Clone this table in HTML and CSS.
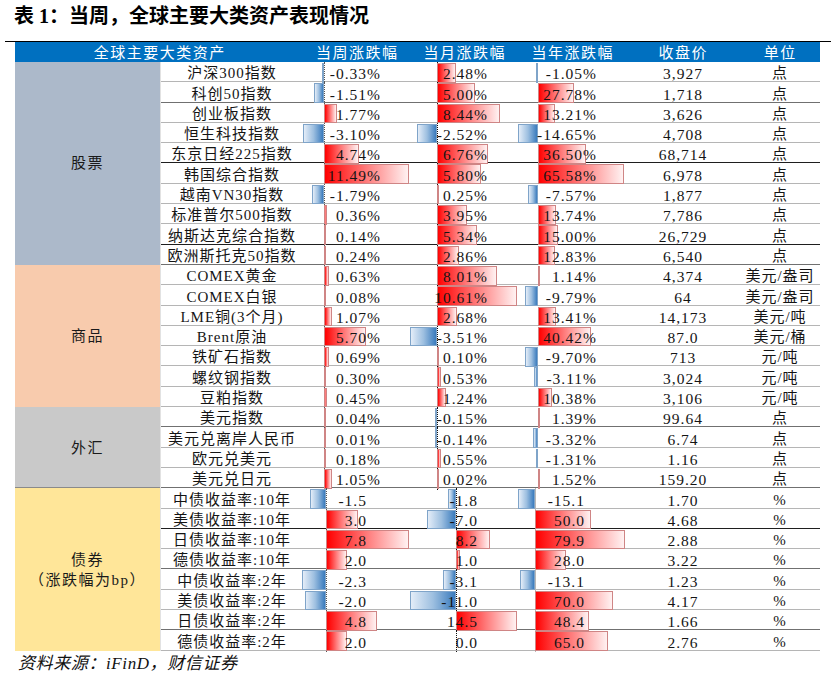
FILE: index.html
```html
<!DOCTYPE html>
<html lang="zh-CN">
<head>
<meta charset="utf-8">
<title>表 1</title>
<link rel="stylesheet" href="styles.css">
</head>
<body>
<h1 class="title">表 1：当周，全球主要大类资产表现情况</h1>
<div class="topline"></div>
<div class="table">
  <div class="thead">
    <div class="th">全球主要大类资产</div>
    <div class="th">当周涨跌幅</div>
    <div class="th">当月涨跌幅</div>
    <div class="th">当年涨跌幅</div>
    <div class="th">收盘价</div>
    <div class="th">单位</div>
  </div>

  <div class="group g-stock">
    <div class="cat"><span>股票</span></div>
    <div class="rows">
      <div class="row"><div class="name">沪深300指数</div>
        <div class="c wk"><i class="bar n" style="width:2.2px"></i><span>-0.33%</span></div>
        <div class="c mo"><i class="bar p" style="width:18.6px"></i><span>2.48%</span></div>
        <div class="c yr"><i class="bar n" style="width:1.5px"></i><span>-1.05%</span></div>
        <div class="px">3,927</div><div class="unit">点</div></div>
      <div class="row d1"><div class="name">科创50指数</div>
        <div class="c wk"><i class="bar n" style="width:10.3px"></i><span>-1.51%</span></div>
        <div class="c mo"><i class="bar p" style="width:37.5px"></i><span>5.00%</span></div>
        <div class="c yr"><i class="bar p" style="width:36.4px"></i><span>27.78%</span></div>
        <div class="px">1,718</div><div class="unit">点</div></div>
      <div class="row"><div class="name">创业板指数</div>
        <div class="c wk"><i class="bar p" style="width:13.1px"></i><span>1.77%</span></div>
        <div class="c mo"><i class="bar p" style="width:63.3px"></i><span>8.44%</span></div>
        <div class="c yr"><i class="bar p" style="width:17.3px"></i><span>13.21%</span></div>
        <div class="px">3,626</div><div class="unit">点</div></div>
      <div class="row"><div class="name">恒生科技指数</div>
        <div class="c wk"><i class="bar n" style="width:21.1px"></i><span>-3.10%</span></div>
        <div class="c mo"><i class="bar n" style="width:19.8px"></i><span>-2.52%</span></div>
        <div class="c yr"><i class="bar n" style="width:20.2px"></i><span>-14.65%</span></div>
        <div class="px">4,708</div><div class="unit">点</div></div>
      <div class="row d2"><div class="name">东京日经225指数</div>
        <div class="c wk"><i class="bar p" style="width:35.1px"></i><span>4.74%</span></div>
        <div class="c mo"><i class="bar p" style="width:50.7px"></i><span>6.76%</span></div>
        <div class="c yr"><i class="bar p" style="width:47.8px"></i><span>36.50%</span></div>
        <div class="px">68,714</div><div class="unit">点</div></div>
      <div class="row"><div class="name">韩国综合指数</div>
        <div class="c wk"><i class="bar p" style="width:85px"></i><span>11.49%</span></div>
        <div class="c mo"><i class="bar p" style="width:43.5px"></i><span>5.80%</span></div>
        <div class="c yr"><i class="bar p" style="width:85.9px"></i><span>65.58%</span></div>
        <div class="px">6,978</div><div class="unit">点</div></div>
      <div class="row"><div class="name">越南VN30指数</div>
        <div class="c wk"><i class="bar n" style="width:12.2px"></i><span>-1.79%</span></div>
        <div class="c mo"><i class="bar p" style="width:1.9px"></i><span>0.25%</span></div>
        <div class="c yr"><i class="bar n" style="width:10.4px"></i><span>-7.57%</span></div>
        <div class="px">1,877</div><div class="unit">点</div></div>
      <div class="row"><div class="name">标准普尔500指数</div>
        <div class="c wk"><i class="bar p" style="width:2.7px"></i><span>0.36%</span></div>
        <div class="c mo"><i class="bar p" style="width:29.6px"></i><span>3.95%</span></div>
        <div class="c yr"><i class="bar p" style="width:18px"></i><span>13.74%</span></div>
        <div class="px">7,786</div><div class="unit">点</div></div>
      <div class="row d2"><div class="name">纳斯达克综合指数</div>
        <div class="c wk"><i class="bar p" style="width:1px"></i><span>0.14%</span></div>
        <div class="c mo"><i class="bar p" style="width:40px"></i><span>5.34%</span></div>
        <div class="c yr"><i class="bar p" style="width:19.7px"></i><span>15.00%</span></div>
        <div class="px">26,729</div><div class="unit">点</div></div>
      <div class="row d1"><div class="name">欧洲斯托克50指数</div>
        <div class="c wk"><i class="bar p" style="width:1.8px"></i><span>0.24%</span></div>
        <div class="c mo"><i class="bar p" style="width:21.5px"></i><span>2.86%</span></div>
        <div class="c yr"><i class="bar p" style="width:16.8px"></i><span>12.83%</span></div>
        <div class="px">6,540</div><div class="unit">点</div></div>
    </div>
  </div>

  <div class="group g-com">
    <div class="cat"><span>商品</span></div>
    <div class="rows">
      <div class="row"><div class="name">COMEX黄金</div>
        <div class="c wk"><i class="bar p" style="width:4.7px"></i><span>0.63%</span></div>
        <div class="c mo"><i class="bar p" style="width:60px"></i><span>8.01%</span></div>
        <div class="c yr"><i class="bar p" style="width:1.5px"></i><span>1.14%</span></div>
        <div class="px">4,374</div><div class="unit">美元/盎司</div></div>
      <div class="row"><div class="name">COMEX白银</div>
        <div class="c wk"><i class="bar p" style="width:1px"></i><span>0.08%</span></div>
        <div class="c mo"><i class="bar p" style="width:79.6px"></i><span>10.61%</span></div>
        <div class="c yr"><i class="bar n" style="width:13.5px"></i><span>-9.79%</span></div>
        <div class="px">64</div><div class="unit">美元/盎司</div></div>
      <div class="row"><div class="name">LME铜(3个月)</div>
        <div class="c wk"><i class="bar p" style="width:7.9px"></i><span>1.07%</span></div>
        <div class="c mo"><i class="bar p" style="width:20.1px"></i><span>2.68%</span></div>
        <div class="c yr"><i class="bar p" style="width:17.6px"></i><span>13.41%</span></div>
        <div class="px">14,173</div><div class="unit">美元/吨</div></div>
      <div class="row"><div class="name">Brent原油</div>
        <div class="c wk"><i class="bar p" style="width:42.2px"></i><span>5.70%</span></div>
        <div class="c mo"><i class="bar n" style="width:26.7px"></i><span>-3.51%</span></div>
        <div class="c yr"><i class="bar p" style="width:53px"></i><span>40.42%</span></div>
        <div class="px">87.0</div><div class="unit">美元/桶</div></div>
      <div class="row"><div class="name">铁矿石指数</div>
        <div class="c wk"><i class="bar p" style="width:5.1px"></i><span>0.69%</span></div>
        <div class="c mo"><i class="bar p" style="width:1px"></i><span>0.10%</span></div>
        <div class="c yr"><i class="bar n" style="width:13.4px"></i><span>-9.70%</span></div>
        <div class="px">713</div><div class="unit">元/吨</div></div>
      <div class="row"><div class="name">螺纹钢指数</div>
        <div class="c wk"><i class="bar p" style="width:2.2px"></i><span>0.30%</span></div>
        <div class="c mo"><i class="bar p" style="width:4px"></i><span>0.53%</span></div>
        <div class="c yr"><i class="bar n" style="width:4.3px"></i><span>-3.11%</span></div>
        <div class="px">3,024</div><div class="unit">元/吨</div></div>
      <div class="row"><div class="name">豆粕指数</div>
        <div class="c wk"><i class="bar p" style="width:3.3px"></i><span>0.45%</span></div>
        <div class="c mo"><i class="bar p" style="width:9.3px"></i><span>1.24%</span></div>
        <div class="c yr"><i class="bar p" style="width:13.6px"></i><span>10.38%</span></div>
        <div class="px">3,106</div><div class="unit">元/吨</div></div>
    </div>
  </div>

  <div class="group g-fx">
    <div class="cat"><span>外汇</span></div>
    <div class="rows">
      <div class="row d1"><div class="name">美元指数</div>
        <div class="c wk"><i class="bar p" style="width:1px"></i><span>0.04%</span></div>
        <div class="c mo"><i class="bar n" style="width:1.1px"></i><span>-0.15%</span></div>
        <div class="c yr"><i class="bar p" style="width:1.8px"></i><span>1.39%</span></div>
        <div class="px">99.64</div><div class="unit">点</div></div>
      <div class="row"><div class="name">美元兑离岸人民币</div>
        <div class="c wk"><i class="bar p" style="width:1px"></i><span>0.01%</span></div>
        <div class="c mo"><i class="bar n" style="width:1.1px"></i><span>-0.14%</span></div>
        <div class="c yr"><i class="bar n" style="width:4.6px"></i><span>-3.32%</span></div>
        <div class="px">6.74</div><div class="unit">点</div></div>
      <div class="row"><div class="name">欧元兑美元</div>
        <div class="c wk"><i class="bar p" style="width:1.3px"></i><span>0.18%</span></div>
        <div class="c mo"><i class="bar p" style="width:4.1px"></i><span>0.55%</span></div>
        <div class="c yr"><i class="bar n" style="width:1.8px"></i><span>-1.31%</span></div>
        <div class="px">1.16</div><div class="unit">点</div></div>
      <div class="row d1"><div class="name">美元兑日元</div>
        <div class="c wk"><i class="bar p" style="width:7.8px"></i><span>1.05%</span></div>
        <div class="c mo"><i class="bar p" style="width:1px"></i><span>0.02%</span></div>
        <div class="c yr"><i class="bar p" style="width:2px"></i><span>1.52%</span></div>
        <div class="px">159.20</div><div class="unit">点</div></div>
    </div>
  </div>

  <div class="group g-bond">
    <div class="cat"><span>债券</span><span>（涨跌幅为bp）</span></div>
    <div class="rows">
      <div class="row"><div class="name">中债收益率:10年</div>
        <div class="c wk"><i class="bar n" style="width:15.9px"></i><span>-1.5</span></div>
        <div class="c mo"><i class="bar n" style="width:7.6px"></i><span>-1.8</span></div>
        <div class="c yr"><i class="bar n" style="width:16.9px"></i><span>-15.1</span></div>
        <div class="px">1.70</div><div class="unit">%</div></div>
      <div class="row d2"><div class="name">美债收益率:10年</div>
        <div class="c wk"><i class="bar p" style="width:31.8px"></i><span>3.0</span></div>
        <div class="c mo"><i class="bar n" style="width:29.4px"></i><span>-7.0</span></div>
        <div class="c yr"><i class="bar p" style="width:56px"></i><span>50.0</span></div>
        <div class="px">4.68</div><div class="unit">%</div></div>
      <div class="row"><div class="name">日债收益率:10年</div>
        <div class="c wk"><i class="bar p" style="width:82.7px"></i><span>7.8</span></div>
        <div class="c mo"><i class="bar p" style="width:34.4px"></i><span>8.2</span></div>
        <div class="c yr"><i class="bar p" style="width:89.5px"></i><span>79.9</span></div>
        <div class="px">2.88</div><div class="unit">%</div></div>
      <div class="row d1"><div class="name">德债收益率:10年</div>
        <div class="c wk"><i class="bar p" style="width:21.2px"></i><span>2.0</span></div>
        <div class="c mo"><i class="bar p" style="width:4.2px"></i><span>1.0</span></div>
        <div class="c yr"><i class="bar p" style="width:31.4px"></i><span>28.0</span></div>
        <div class="px">3.22</div><div class="unit">%</div></div>
      <div class="row"><div class="name">中债收益率:2年</div>
        <div class="c wk"><i class="bar n" style="width:24.4px"></i><span>-2.3</span></div>
        <div class="c mo"><i class="bar n" style="width:13px"></i><span>-3.1</span></div>
        <div class="c yr"><i class="bar n" style="width:14.7px"></i><span>-13.1</span></div>
        <div class="px">1.23</div><div class="unit">%</div></div>
      <div class="row"><div class="name">美债收益率:2年</div>
        <div class="c wk"><i class="bar n" style="width:21.2px"></i><span>-2.0</span></div>
        <div class="c mo"><i class="bar n" style="width:46.2px"></i><span>-11.0</span></div>
        <div class="c yr"><i class="bar p" style="width:78.4px"></i><span>70.0</span></div>
        <div class="px">4.17</div><div class="unit">%</div></div>
      <div class="row d1"><div class="name">日债收益率:2年</div>
        <div class="c wk"><i class="bar p" style="width:50.9px"></i><span>4.8</span></div>
        <div class="c mo"><i class="bar p" style="width:60.9px"></i><span>14.5</span></div>
        <div class="c yr"><i class="bar p" style="width:54.2px"></i><span>48.4</span></div>
        <div class="px">1.66</div><div class="unit">%</div></div>
      <div class="row"><div class="name">德债收益率:2年</div>
        <div class="c wk"><i class="bar p" style="width:21.2px"></i><span>2.0</span></div>
        <div class="c mo"><span>0.0</span></div>
        <div class="c yr"><i class="bar p" style="width:72.8px"></i><span>65.0</span></div>
        <div class="px">2.76</div><div class="unit">%</div></div>
    </div>
  </div>
</div>
<p class="source">资料来源：iFinD，财信证券</p>
</body>
</html>
```

FILE: styles.css
```css
* { box-sizing: border-box; }

body {
  margin: 0;
  background: #fff;
  color: #141414;
  font-family: "Liberation Serif", "Noto Sans CJK SC", serif;
}

.title {
  margin: 0;
  height: 40.5px;
  padding: 3px 0 0 14px;
  font-size: 20px;
  line-height: 26px;
  font-weight: 700;
  color: #000;
  white-space: pre;
}

.topline {
  height: 1.5px;
  margin: 0 6px 0 5px;
  background: #000;
}

.table {
  margin-left: 15px;
  width: 805px;
}

.thead {
  display: grid;
  grid-template-columns: 288px 107px 108px 108px 113px 81px;
  height: 20px;
  background: #0070c0;
  color: #fff;
  font-size: 15px;
  line-height: 20px;
  letter-spacing: 1.5px;
}

.th {
  text-align: center;
  padding-top: 1px;
  padding-left: 1.5px;
}

.group { display: flex; }

.cat {
  width: 146px;
  flex: none;
  display: flex;
  flex-direction: column;
  align-items: center;
  justify-content: center;
  border-right: 1px solid #e2e2e2;
  font-size: 15px;
  line-height: 20px;
  letter-spacing: 1.5px;
  color: #1a1a1a;
}

.g-stock .cat { background: #acb9ca; }
.g-com .cat { background: #f8cbad; }
.g-fx .cat { background: #c9c9c9; box-shadow: inset 0 -1px 0 #8a8a8a; }
.g-bond .cat { background: #ffe699; padding-top: 2px; }

.rows { flex: 1; }

.row {
  display: grid;
  grid-template-columns: 142px 107px 108px 108px 113px 81px;
  height: 20.3px;
  border-bottom: 1px solid #b5b5b5;
  font-size: 15.5px;
  line-height: 19.3px;
  letter-spacing: 1px;
}

.row.d1 { border-bottom-color: #707070; }
.row.d2 { border-bottom-color: #1e1e1e; }

.row > div {
  padding-top: 2.3px;
  white-space: nowrap;
}

.name {
  font-size: 15px;
  text-align: center;
}

.px { text-align: center; padding-left: 1px; }
.unit { text-align: center; font-size: 15px; padding-left: 1px; }

/* data-bar cells */
.c {
  position: relative;
  text-align: right;
  --ax: 20px;
}

.c::before {
  content: "";
  position: absolute;
  top: 0;
  bottom: 0;
  left: var(--ax);
  border-left: 1px dotted #555;
}

.c > span { position: relative; }

.wk { --ax: 21px; padding-right: 29px; }
.mo { --ax: 27px; padding-right: 30px; }
.yr { --ax: 20px; padding-right: 29px; }
.yr::before { border-left: 0; }
.mo::before { border-left-color: #111; }

.g-bond .wk { --ax: 23px; padding-right: 43px; }
.g-bond .mo { --ax: 46px; padding-right: 40px; }
.g-bond .yr { --ax: 17px; padding-right: 41px; }
.g-bond .yr::before { border-left: 1px solid #b8b8b8; }

.bar {
  position: absolute;
  top: 1px;
  bottom: 1px;
  min-width: 1px;
}

.bar.p {
  left: var(--ax);
  background: linear-gradient(90deg, #ff0000 0%, #ff7c7c 50%, #fff2f2 100%);
  border: 1px solid #cf8585;
}

.bar.n {
  right: calc(100% - var(--ax));
  background: linear-gradient(90deg, #e4edf8 0%, #9dbfe0 50%, #3a7bbd 100%);
  border: 1px solid #7fa4c9;
}

.source {
  margin: 3px 0 0 18px;
  font-size: 17px;
  line-height: 20px;
  font-style: italic;
  letter-spacing: 0.6px;
  color: #111;
}
```
